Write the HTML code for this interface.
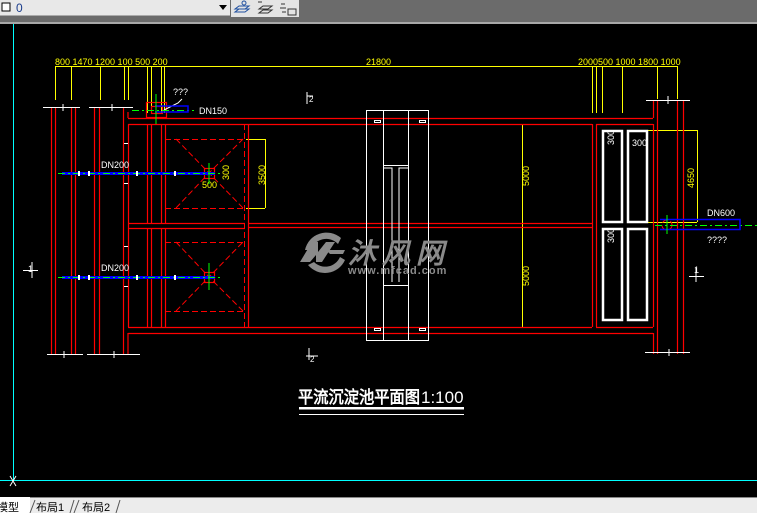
<!DOCTYPE html>
<html><head><meta charset="utf-8"><style>
html,body{margin:0;padding:0;background:#000;width:757px;height:513px;overflow:hidden}
svg{display:block}
text{font-family:"Liberation Sans Narrow","Liberation Sans",sans-serif}
</style></head><body>
<svg width="757" height="513" viewBox="0 0 757 513" xmlns="http://www.w3.org/2000/svg">
<rect width="757" height="513" fill="#000"/>
<!-- toolbar -->
<rect x="0" y="0" width="757" height="22" fill="#6b6b6b"/>
<rect x="0" y="22" width="757" height="2" fill="#a8a8a8"/>
<rect x="0" y="0" width="230" height="16" fill="#e8e8e8"/>
<rect x="0" y="15" width="230" height="1" fill="#aaa"/>
<rect x="2" y="3" width="8" height="8" fill="#fff" stroke="#000" stroke-width="1"/>
<text x="16" y="12" font-size="12" fill="#1a3c8c" font-family="Liberation Sans">0</text>
<path d="M219 5 L227 5 L223 10 Z" fill="#000"/>
<rect x="231" y="0" width="68" height="17" fill="#e4e4e4"/>
<path d="M235 12 L245 12 L249 9 L239 9 Z M235 9 L245 9 L249 6 L239 6 Z" fill="none" stroke="#2050a0" stroke-width="1"/>
<circle cx="244" cy="3" r="2" fill="none" stroke="#2050a0"/>
<path d="M259 13 L268 13 L272 10 L263 10 Z M259 9 L268 9 L272 6 L263 6 Z M258 2 L262 2" fill="none" stroke="#333" stroke-width="1"/>
<path d="M281 4 L285 4 M280 8 L286 8 M282 12 L286 12" stroke="#333"/>
<rect x="288" y="9" width="8" height="6" fill="none" stroke="#333"/>

<!-- cyan lines -->
<line x1="13.5" y1="24" x2="13.5" y2="481" stroke="#0ff" stroke-width="1"/>
<line x1="0" y1="480.5" x2="757" y2="480.5" stroke="#0ff" stroke-width="1"/>
<path d="M10 476 L16 486 M16 476 L10 486" stroke="#fff"/>

<!-- dimension lines yellow -->
<g stroke="#ff0" stroke-width="1" fill="none">
<line x1="55" y1="66.5" x2="298" y2="66.5"/>
<line x1="298" y1="66.5" x2="677" y2="66.5"/>
<path d="M55.5 66 V100 M71.5 66 V100 M100.5 66 V100 M124.5 66 V100 M128.5 66 V100 M147.5 66 V113 M151.5 66 V113 M161.5 66 V113 M164.5 66 V113"/>
<path d="M592.5 66 V113 M596.5 66 V113 M602.5 66 V113 M622.5 66 V113 M657.5 66 V99 M677.5 66 V99"/>
<path d="M522.5 124 V327"/>
<path d="M647 130.5 H697 M697.5 130 V222 M647 222.5 H697"/>
<path d="M246 139.5 H265 M265.5 139 V208 M246 208.5 H265"/>
</g>
<g fill="#ff0" font-size="9">
<text x="55" y="65">800 1470 1200 100 500 200</text>
<text x="366" y="65">21800</text>
<text x="578" y="65">2000500 1000 1800 1000</text>
<text transform="translate(529,186) rotate(-90)" font-size="9">5000</text>
<text transform="translate(529,286) rotate(-90)" font-size="9">5000</text>
<text transform="translate(694,188) rotate(-90)" font-size="9">4650</text>
<text transform="translate(265,185) rotate(-90)" font-size="9">3500</text>
<text x="202" y="188" font-size="9">500</text>
<text transform="translate(229,180) rotate(-90)" font-size="9">300</text>
</g>

<!-- red walls -->
<g stroke="#f00" stroke-width="1.2" fill="none">
<path d="M51.5 107 V354 M55.5 107 V354 M71.5 107 V354 M75.5 107 V354 M94.5 107 V354 M99.5 107 V354 M123.5 107 V354 M128.5 124 V327"/>
<path d="M128 118.5 H653 M128 124.5 H592 M128 327.5 H592 M128 333.5 H653"/>
<path d="M128 112 V118 M128 333 V354"/>
<path d="M653.5 100 V118 M653.5 333 V354 M657.5 100 V354 M677.5 100 V354 M683.5 100 V354"/>
<path d="M592.5 124 V327 M596.5 124 V327 M596 124.5 H653 M596 327.5 H653 M653.5 124 V327"/>
<path d="M147.5 124 V223 M151.5 124 V223 M161.5 124 V223 M165.5 124 V223 M147.5 228 V327 M151.5 228 V327 M161.5 228 V327 M165.5 228 V327"/>
<path d="M128 223.5 H245 M128 228.5 H245"/>
<path d="M248.5 124 V327 M248 223.5 H592 M248 227.5 H592"/>
<rect x="146.5" y="102.5" width="20" height="15"/>
<rect x="151.5" y="106.5" width="11" height="7"/>
<rect x="204.5" y="168.5" width="10" height="10"/>
<rect x="204.5" y="272.5" width="10" height="10"/>
</g>
<g stroke="#f00" stroke-width="1" fill="none" stroke-dasharray="6,3">
<path d="M244.5 124 V327"/>
<path d="M165 139.5 H244 M165 208.5 H244 M165 242.5 H244 M165 311.5 H244"/>
<path d="M176 139 L209 173 L243 139 M176 208 L209 173 M243 208 L209 173"/>
<path d="M176 242 L209 277 L243 242 M176 311 L209 277 M243 311 L209 277"/>
<circle cx="667" cy="225" r="5"/>
</g>

<!-- white structures -->
<g stroke="#fff" stroke-width="1" fill="none">
<rect x="366.5" y="110.5" width="62" height="230"/>
<path d="M383.5 110 V340 M408.5 110 V340 M383 165.5 H408 M383 285.5 H408 M383 168 H392 V282 M408 168 H399 V282"/>
<rect x="374.5" y="120.5" width="6" height="2"/><rect x="419.5" y="120.5" width="6" height="2"/>
<rect x="374.5" y="328.5" width="6" height="2"/><rect x="419.5" y="328.5" width="6" height="2"/>
<path d="M43 107.5 H80 M89 107.5 H133 M63 104 V111 M112 104 V111"/>
<path d="M47 354.5 H83 M87 354.5 H140 M64 351 V358 M114 351 V358"/>
<path d="M646 100.5 H690 M668 96 V104"/>
<path d="M645 352.5 H690 M669 349 V356"/>
<path d="M164 110 L178 103 L182 99"/>
<path d="M23 270.5 H38 M32 262 V278"/>
<path d="M689 276.5 H704 M696 268 V282"/>
<path d="M307 92 V104 M307 96 H313"/>
<path d="M309 348 V360 M306 356 H318"/>
<path d="M124 143.5 H128 M124 183.5 H128 M124 246.5 H128 M124 286.5 H128"/>
</g>
<g stroke="#fff" stroke-width="2.5" fill="none">
<rect x="603" y="131" width="19" height="91"/>
<rect x="628" y="131" width="19" height="91"/>
<rect x="603" y="229" width="19" height="91"/>
<rect x="628" y="229" width="19" height="91"/>
</g>
<g fill="#fff" font-size="9">
<text x="173" y="95">???</text>
<text x="199" y="114">DN150</text>
<text x="101" y="168">DN200</text>
<text x="101" y="271">DN200</text>
<text x="707" y="216">DN600</text>
<text x="707" y="243">????</text>
<text x="632" y="146">300</text>
<text transform="translate(614,145) rotate(-90)">300</text>
<text transform="translate(614,243) rotate(-90)">300</text>
<text x="309" y="102" font-size="8">2</text>
<text x="310" y="362" font-size="8">2</text>
<text x="28" y="272" font-size="9">1</text>
<text x="694" y="273" font-size="9">1</text>
</g>

<!-- pipes -->
<g fill="none">
<path d="M62 173.5 H215 M62 277.5 H215" stroke="#0000ff" stroke-width="3"/>
<path d="M58 173.5 H222 M58 277.5 H222 M132 110.5 H194 M655 225.5 H757" stroke="#0f0" stroke-width="1" stroke-dasharray="7,3,2,3"/>
<path d="M155 106 H188 V112 H155" stroke="#00f" stroke-width="1.5"/>
<path d="M660 219.5 H740 V229.5 H660" stroke="#00f" stroke-width="1.5"/>
<path d="M156 94 V124 M209 163 V184 M209 263 V290 M667 215 V234" stroke="#0f0" stroke-width="1"/>
<path d="M79 171 V176 M89 171 V176 M137 171 V176 M175 171 V176 M79 275 V280 M89 275 V280 M137 275 V280 M175 275 V280" stroke="#fff" stroke-width="2"/>
</g>

<!-- watermark -->
<g fill="#8a8a8a">
<path d="M300 262 L312 242 L318 242 L318 252 L326 242 L335 242 L322 262 L316 262 L316 255 L310 262 Z"/>
<path d="M305 250 A22 22 0 0 1 341 238 L338 244 A16 16 0 0 0 311 250 Z"/>
<path d="M308 265 A22 22 0 0 0 345 260 L340 257 A16 16 0 0 1 314 262 Z"/>
<path d="M326 250 L345 250 L343 254 L330 254 Z"/>
<text x="348" y="263" font-size="28" font-weight="bold" font-family="'Noto Sans CJK SC',sans-serif" letter-spacing="6" font-style="italic">沐风网</text>
<text x="348" y="274" font-size="11" font-weight="bold" font-family="'Liberation Sans',sans-serif" letter-spacing="1">www.mfcad.com</text>
</g>

<!-- title -->
<text x="298" y="403" font-size="17" fill="#fff" font-family="'Noto Sans CJK SC',sans-serif" font-weight="bold" textLength="122" lengthAdjust="spacingAndGlyphs">平流沉淀池平面图</text>
<text x="421" y="403" font-size="17" fill="#fff" font-family="'Liberation Sans Narrow','Liberation Sans',sans-serif">1:100</text>
<rect x="299" y="407" width="165" height="2.5" fill="#fff"/>
<rect x="299" y="414" width="165" height="1" fill="#fff"/>

<!-- tabs -->
<rect x="0" y="497" width="757" height="16" fill="#ececec"/>
<rect x="0" y="497" width="757" height="1" fill="#888"/>
<rect x="0" y="497" width="30" height="16" fill="#fff"/>
<g font-size="11" fill="#000" font-family="'Liberation Sans','Noto Sans CJK SC',sans-serif">
<text x="-3" y="511">模型</text>
<text x="36" y="511">布局1</text>
<text x="82" y="511">布局2</text>
</g>
<path d="M30 513 L35 500 M74 500 L70 513 M79 500 L74 513 M120 500 L116 513" stroke="#555" fill="none"/>
</svg>
</body></html>
